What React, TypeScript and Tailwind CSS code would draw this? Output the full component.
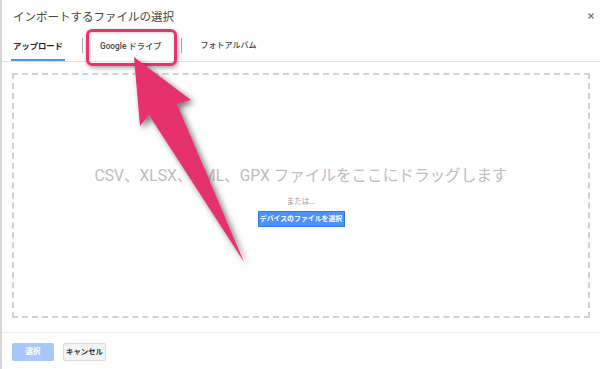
import React from 'react';

const FONT = { fontFamily: 'Roboto, Arial, "Noto Sans CJK JP", sans-serif' };

const App: React.FC = () => {
  return (
    <div className="relative w-[600px] h-[369px] overflow-hidden bg-white border-l-2 border-[#d6d6d6]" style={FONT}>
      {/* header */}
      <div className="flex items-start justify-between pl-[11px] pr-[6px] pt-[9px] h-[33px]">
        <h1 className="text-[11.5px] leading-[16px] text-[#444]">インポートするファイルの選択</h1>
        <svg width="6" height="6" viewBox="0 0 6 6" className="mt-[4px]">
          <path d="M0.5 0.5 L5.5 5.5 M5.5 0.5 L0.5 5.5" stroke="#777" strokeWidth="1.3" />
        </svg>
      </div>

      {/* tabs */}
      <div className="flex items-stretch h-[29px] pl-[9px] border-b border-[#e3e3e3]">
        <div className="flex items-center justify-center w-[54px] border-b-2 border-[#4d90fe] text-[8.3px] font-bold text-[#222]">
          アップロード
        </div>
        <div className="ml-[17px] mt-[5px] h-[15px] w-px bg-[#aaa]" />
        <div className="flex items-center ml-[17px] pb-[2px] text-[8.3px] font-medium text-[#444]">Google ドライブ</div>
        <div className="ml-[19px] mt-[5px] h-[15px] w-px bg-[#aaa]" />
        <div className="flex items-center ml-[19px] pb-[2px] text-[8px] font-medium text-[#444]">フォトアルバム</div>
      </div>

      {/* drop zone */}
      <div className="px-[10px] pt-[11px] pb-[14px]">
        <div className="flex flex-col items-center h-[245px] border-2 border-dashed border-[#d2d2d2]">
          <p className="mt-[91px] text-[15.6px] leading-[20px] text-[#bdbdbd] whitespace-nowrap">
            CSV、XLSX、KML、GPX ファイルをここにドラッグします
          </p>
          <p className="mt-[11px] text-[7.5px] leading-[10px] text-[#999]">または...</p>
          <button className="mt-[4px] h-[16px] w-[87px] whitespace-nowrap bg-[#4d90fe] border border-[#3079ed] text-[6.9px] font-bold text-white">
            デバイスのファイルを選択
          </button>
        </div>
      </div>

      {/* footer */}
      <div className="flex gap-[9px] pl-[10px] pt-[10px] border-t border-[#ebebeb]">
        <button className="h-[18px] w-[42px] rounded-[2px] bg-[#a9c7fb] text-[7.5px] font-bold text-white">選択</button>
        <button className="h-[18px] w-[43px] whitespace-nowrap rounded-[2px] bg-[#f3f3f3] border border-[#dcdcdc] text-[7.4px] font-bold text-[#333]">
          キャンセル
        </button>
      </div>

      {/* annotation: highlight box */}
      <div className="absolute left-[84px] top-[29px] w-[91px] h-[37px] rounded-[6px] border-[3px] border-[#e8336d] shadow-[1px_2px_4px_rgba(0,0,0,0.35),inset_1px_1px_3px_rgba(0,0,0,0.2)]" />

      {/* annotation: arrow */}
      <svg className="absolute left-[-2px] top-0" width="600" height="369" viewBox="0 0 600 369">
        <defs>
          <filter id="sh" x="-20%" y="-20%" width="140%" height="140%">
            <feDropShadow dx="3" dy="3" stdDeviation="3" floodColor="#000" floodOpacity="0.55" />
          </filter>
        </defs>
        <polygon
          points="134,57 191,100 177,104 244,262 149,115 140,126"
          fill="#e6336c"
          filter="url(#sh)"
        />
      </svg>
    </div>
  );
};

export default App;
